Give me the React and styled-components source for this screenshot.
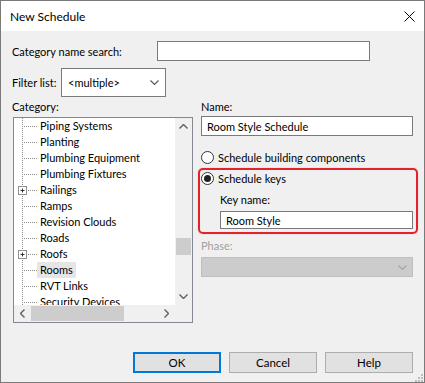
import React from 'react';
import styled, { createGlobalStyle } from 'styled-components';

const Global = createGlobalStyle`
  html, body { margin: 0; padding: 0; background: #fff; }
  body { font-family: Lato, "Liberation Sans", sans-serif; font-size: 11px; color: #000; }
  * { box-sizing: border-box; }
`;

const Window = styled.div`
  position: relative;
  width: 425px;
  height: 383px;
  border: 1px solid #7a7a7a;
  background: #f0f0f0;
  display: flex;
  flex-direction: column;
`;

const TitleBar = styled.div`
  flex: none;
  height: 30px;
  background: #fff;
  display: flex;
  align-items: center;
  justify-content: space-between;
  padding: 0 9px;
`;

const Title = styled.span`
  font-size: 12px;
  color: #000;
`;

const Body = styled.div`
  flex: 1;
  display: flex;
  flex-direction: column;
  padding: 10px 11px 0 11px;
`;

const Row = styled.div`
  display: flex;
  align-items: center;
  height: ${p => p.$h}px;
  margin-top: ${p => p.$mt || 0}px;
`;

const FieldLabel = styled.span`
  flex: none;
  width: ${p => p.$w}px;
  white-space: nowrap;
`;

const TextBox = styled.div`
  display: flex;
  align-items: center;
  flex: none;
  width: ${p => (p.$w ? `${p.$w}px` : 'auto')};
  height: ${p => p.$h || 20}px;
  margin-top: ${p => p.$mt || 0}px;
  margin-left: ${p => p.$ml || 0}px;
  border: 1px solid #7a7a7a;
  background: #fff;
  padding: 0 5px;
  white-space: nowrap;
`;

const Combo = styled.div`
  flex: none;
  width: 105px;
  height: 29px;
  border: 1px solid #7a7a7a;
  background: #fff;
  display: flex;
  align-items: center;
  justify-content: space-between;
  padding: 0 6px 0 6px;
`;

const Columns = styled.div`
  display: flex;
  margin-top: 2px;
`;

const LeftCol = styled.div`
  flex: none;
  width: 181px;
  display: flex;
  flex-direction: column;
`;

const RightCol = styled.div`
  flex: none;
  width: 212px;
  margin-left: 8px;
  display: flex;
  flex-direction: column;
`;

const ColLabel = styled.div`
  height: 16px;
  line-height: 16px;
  margin-top: ${p => p.$mt || 0}px;
  margin-left: ${p => p.$ml || 0}px;
  color: ${p => (p.$disabled ? '#a0a0a0' : '#000')};
`;

const TreeBox = styled.div`
  margin: 2px 0 0 1px;
  width: 180px;
  height: 206px;
  border: 1px solid #828790;
  background: #fff;
  display: grid;
  grid-template-columns: 1fr 17px;
  grid-template-rows: 1fr 17px;
  overflow: hidden;
`;

const TreeRows = styled.div`
  overflow: hidden;
  display: flex;
  flex-direction: column;
`;

const TreeRow = styled.div`
  flex: none;
  height: 16px;
  display: flex;
  align-items: center;
`;

const TreeText = styled.span`
  height: 16px;
  line-height: 16px;
  padding: 0 3px;
  white-space: nowrap;
  background: ${p => (p.$selected ? '#e5e5e5' : 'transparent')};
`;

const VScroll = styled.div`
  background: #f0f0f0;
  display: grid;
  grid-template-rows: 17px 1fr 17px;
`;

const HScroll = styled.div`
  background: #f0f0f0;
  display: grid;
  grid-template-columns: 17px 1fr 17px;
`;

const ScrollButton = styled.div`
  display: flex;
  align-items: center;
  justify-content: center;
`;

const Track = styled.div`
  display: flex;
  flex-direction: ${p => (p.$vertical ? 'column' : 'row')};
`;

const Thumb = styled.div`
  background: #cdcdcd;
  ${p =>
    p.$vertical
      ? `margin: ${p.$offset}px 1px 0 1px; height: ${p.$size}px;`
      : `margin: 1px 0 1px ${p.$offset}px; width: ${p.$size}px;`}
`;

const Corner = styled.div`
  background: #f0f0f0;
`;

const RadioRow = styled.div`
  height: 16px;
  display: flex;
  align-items: center;
  gap: 4px;
  margin-top: ${p => p.$mt || 0}px;
`;

const RadioCircle = styled.span`
  flex: none;
  width: 13px;
  height: 13px;
  border-radius: 50%;
  border: 1px solid #333;
  background: #fff;
  display: flex;
  align-items: center;
  justify-content: center;
`;

const RadioDot = styled.span`
  width: 7px;
  height: 7px;
  border-radius: 50%;
  background: #222;
`;

const KeyBox = styled.div`
  margin: 3px -5px 0 -3px;
  border: 2px solid #e3232c;
  border-radius: 5px;
  box-shadow: 0 0 1px rgba(227, 35, 44, 0.5);
  padding: 0 3px 3px 1px;
  display: flex;
  flex-direction: column;
`;

const DisabledSelect = styled.div`
  margin-top: 3px;
  height: 20px;
  background: #cccccc;
  border: 1px solid #bfbfbf;
  display: flex;
  align-items: center;
  justify-content: flex-end;
  padding-right: 5px;
`;

const ButtonRow = styled.div`
  display: flex;
  justify-content: flex-end;
  gap: 8px;
  margin-top: 29px;
`;

const Button = styled.button`
  width: 88px;
  height: 21px;
  font-family: inherit;
  font-size: 11.5px;
  color: #000;
  background: #e1e1e1;
  border: ${p => (p.$primary ? '2px solid #0078d7' : '1px solid #adadad')};
  padding: 0;
  margin: 0;
`;

const GripSpot = styled.span`
  position: absolute;
  right: 1px;
  bottom: 1px;
  width: 10px;
  height: 10px;
  display: block;
`;

const Chevron = ({ dir = 'down', color = '#444', w = 8, h = 5, sw = 1.4 }) => {
  const paths = {
    down: `M0.5 0.5 L${w / 2} ${h - 0.5} L${w - 0.5} 0.5`,
    up: `M0.5 ${h - 0.5} L${w / 2} 0.5 L${w - 0.5} ${h - 0.5}`,
  };
  if (dir === 'left' || dir === 'right') {
    const d =
      dir === 'right'
        ? `M0.5 0.5 L${h - 0.5} ${w / 2} L0.5 ${w - 0.5}`
        : `M${h - 0.5} 0.5 L0.5 ${w / 2} L${h - 0.5} ${w - 0.5}`;
    return (
      <svg width={h} height={w} viewBox={`0 0 ${h} ${w}`}>
        <path d={d} fill="none" stroke={color} strokeWidth={sw} />
      </svg>
    );
  }
  return (
    <svg width={w} height={h} viewBox={`0 0 ${w} ${h}`}>
      <path d={paths[dir]} fill="none" stroke={color} strokeWidth={sw} />
    </svg>
  );
};

const CloseIcon = () => (
  <svg width="11" height="11" viewBox="0 0 11 11">
    <path d="M0.5 0.5 L10.5 10.5 M10.5 0.5 L0.5 10.5" stroke="#000" strokeWidth="1" fill="none" />
  </svg>
);

const Connector = ({ expandable }) => (
  <svg width="23" height="16" viewBox="0 0 23 16" style={{ flex: 'none' }}>
    <line x1="8.5" y1="0" x2="8.5" y2="16" stroke="#8a8a8a" strokeDasharray="1 1" />
    <line x1="10" y1="8.5" x2="23" y2="8.5" stroke="#8a8a8a" strokeDasharray="1 1" />
    {expandable && (
      <g>
        <rect x="4.5" y="4.5" width="8" height="8" fill="#fff" stroke="#919191" />
        <path d="M6.5 8.5 H10.5 M8.5 6.5 V10.5" stroke="#333" strokeWidth="1" />
      </g>
    )}
  </svg>
);

const Grip = () => (
  <GripSpot>
    <svg width="10" height="10" viewBox="0 0 10 10">
      {[
        [8, 2],
        [5, 5],
        [8, 5],
        [2, 8],
        [5, 8],
        [8, 8],
      ].map(([x, y]) => (
        <rect key={`${x}-${y}`} x={x} y={y} width="2" height="2" fill="#bdbdbd" />
      ))}
    </svg>
  </GripSpot>
);

const treeItems = [
  { label: 'Piping Systems' },
  { label: 'Planting' },
  { label: 'Plumbing Equipment' },
  { label: 'Plumbing Fixtures' },
  { label: 'Railings', expandable: true },
  { label: 'Ramps' },
  { label: 'Revision Clouds' },
  { label: 'Roads' },
  { label: 'Roofs', expandable: true },
  { label: 'Rooms', selected: true },
  { label: 'RVT Links' },
  { label: 'Security Devices' },
];

const Radio = ({ checked, children, mt }) => (
  <RadioRow $mt={mt}>
    <RadioCircle>{checked && <RadioDot />}</RadioCircle>
    <span>{children}</span>
  </RadioRow>
);

export default function App() {
  return (
    <>
      <Global />
      <Window>
        <TitleBar>
          <Title>New Schedule</Title>
          <CloseIcon />
        </TitleBar>
        <Body>
          <Row $h={20}>
            <FieldLabel $w={145}>Category name search:</FieldLabel>
            <TextBox $w={213} />
          </Row>
          <Row $h={29} $mt={7}>
            <FieldLabel $w={49}>Filter list:</FieldLabel>
            <Combo>
              <span>&lt;multiple&gt;</span>
              <Chevron dir="down" color="#555" w={9} h={5} sw={1.1} />
            </Combo>
          </Row>
          <Columns>
            <LeftCol>
              <ColLabel>Category:</ColLabel>
              <TreeBox>
                <TreeRows>
                  {treeItems.map(item => (
                    <TreeRow key={item.label}>
                      <Connector expandable={item.expandable} />
                      <TreeText $selected={item.selected}>{item.label}</TreeText>
                    </TreeRow>
                  ))}
                </TreeRows>
                <VScroll>
                  <ScrollButton>
                    <Chevron dir="up" color="#606060" w={9} h={5} />
                  </ScrollButton>
                  <Track $vertical>
                    <Thumb $vertical $offset={103} $size={17} />
                  </Track>
                  <ScrollButton>
                    <Chevron dir="down" color="#606060" w={9} h={5} />
                  </ScrollButton>
                </VScroll>
                <HScroll>
                  <ScrollButton>
                    <Chevron dir="left" color="#606060" w={9} h={5} />
                  </ScrollButton>
                  <Track>
                    <Thumb $offset={0} $size={93} />
                  </Track>
                  <ScrollButton>
                    <Chevron dir="right" color="#606060" w={9} h={5} />
                  </ScrollButton>
                </HScroll>
                <Corner />
              </TreeBox>
            </LeftCol>
            <RightCol>
              <ColLabel>Name:</ColLabel>
              <TextBox $mt={1}>Room Style Schedule</TextBox>
              <Radio mt={13}>Schedule building components</Radio>
              <KeyBox>
                <Radio checked>Schedule keys</Radio>
                <ColLabel $mt={6} $ml={19}>Key name:</ColLabel>
                <TextBox $mt={3} $ml={19} $h={18}>Room Style</TextBox>
              </KeyBox>
              <ColLabel $mt={4} $disabled>Phase:</ColLabel>
              <DisabledSelect>
                <Chevron dir="down" color="#a6a6a6" w={9} h={5} sw={1.1} />
              </DisabledSelect>
            </RightCol>
          </Columns>
          <ButtonRow>
            <Button $primary>OK</Button>
            <Button>Cancel</Button>
            <Button>Help</Button>
          </ButtonRow>
        </Body>
        <Grip />
      </Window>
    </>
  );
}
